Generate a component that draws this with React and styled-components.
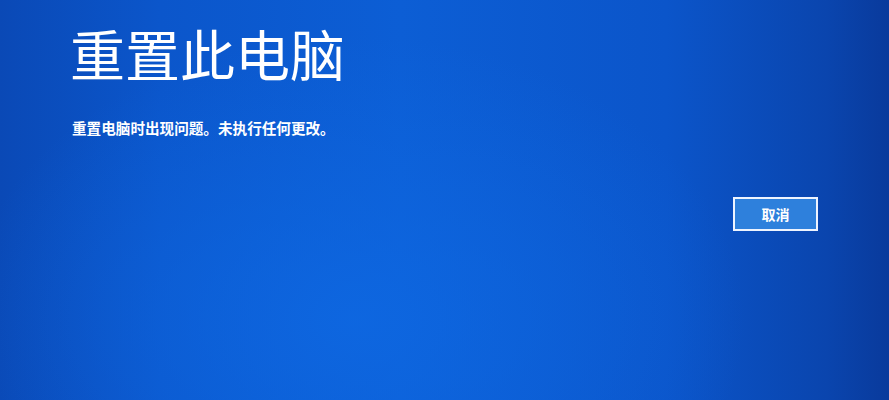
import React from "react"
import styled, { createGlobalStyle } from "styled-components"

const GlobalStyle = createGlobalStyle`
  html, body {
    margin: 0;
    padding: 0;
    background: #0a52c4;
  }
  #root {
    min-height: 100vh;
  }
`

const Screen = styled.div`
  width: 889px;
  height: 400px;
  box-sizing: border-box;
  padding: 19px 71px 0 70px;
  display: flex;
  flex-direction: column;
  overflow: hidden;
  font-family: "Noto Sans CJK SC", "Noto Sans", sans-serif;
  color: #ffffff;
  background:
    radial-gradient(ellipse 520px 380px at 40% 80%, rgba(14, 104, 226, 0.85), rgba(14, 104, 226, 0) 75%),
    linear-gradient(90deg, #0a49b6 0%, #0b56cb 18%, #0c5ed5 45%, #0b55ca 75%, #0a45ae 93%, #093a9c 100%);
`

const Title = styled.h1`
  margin: 0;
  font-size: 55px;
  font-weight: 400;
  line-height: 66px;
`

const Message = styled.p`
  margin: 33px 0 0 2px;
  font-size: 14.6px;
  font-weight: 700;
  line-height: 20px;
`

const Actions = styled.div`
  display: flex;
  justify-content: flex-end;
  margin-top: 59px;
`

const Button = styled.button`
  width: 85px;
  height: 34px;
  box-sizing: border-box;
  border: 2px solid #eef4ff;
  background: #2e80dc;
  color: #ffffff;
  font-family: inherit;
  font-size: 14px;
  font-weight: 700;
  padding: 0;
  cursor: pointer;
`

export default function App() {
  return (
    <>
      <GlobalStyle />
      <Screen>
        <Title>重置此电脑</Title>
        <Message>重置电脑时出现问题。未执行任何更改。</Message>
        <Actions>
          <Button>取消</Button>
        </Actions>
      </Screen>
    </>
  )
}
